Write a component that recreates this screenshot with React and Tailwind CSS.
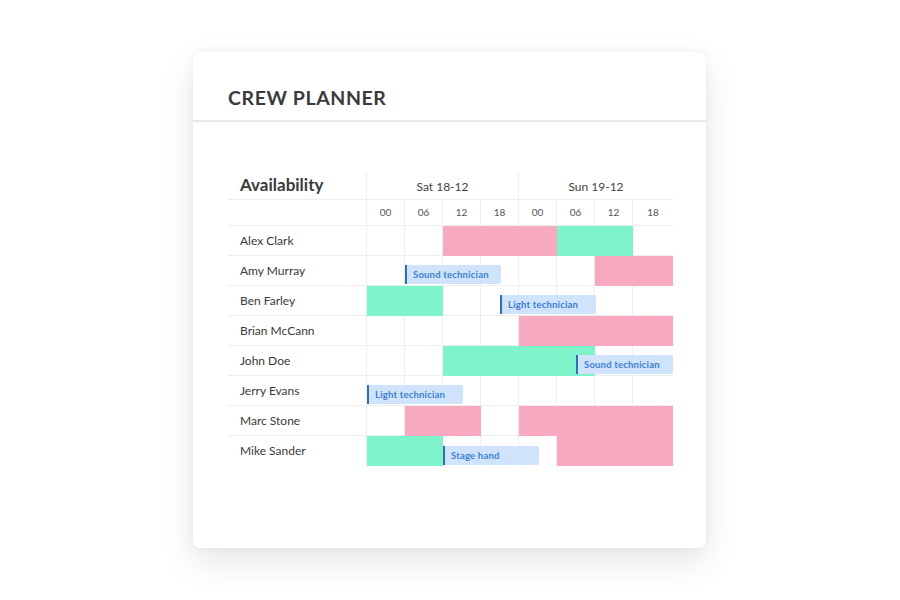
import React from "react";

const COL = 38;
const FULL = 306;
const PINK = "bg-[#f9a9bf]";
const GREEN = "bg-[#7ff3c9]";

const rows = [
  { name: "Alex Clark", blocks: [{ c: "p", s: 2, e: 5 }, { c: "g", s: 5, e: 7 }] },
  { name: "Amy Murray", blocks: [{ c: "p", s: 6, e: 8 }], tags: [{ t: "Sound technician", s: 1 }] },
  { name: "Ben Farley", blocks: [{ c: "g", s: 0, e: 2 }], tags: [{ t: "Light technician", s: 3.5 }] },
  { name: "Brian McCann", blocks: [{ c: "p", s: 4, e: 8 }] },
  { name: "John Doe", blocks: [{ c: "g", s: 2, e: 6 }], tags: [{ t: "Sound technician", s: 5.5 }] },
  { name: "Jerry Evans", blocks: [], tags: [{ t: "Light technician", s: 0 }] },
  { name: "Marc Stone", blocks: [{ c: "p", s: 1, e: 3 }, { c: "p", s: 4, e: 8 }] },
  { name: "Mike Sander", blocks: [{ c: "g", s: 0, e: 2 }, { c: "p", s: 5, e: 8 }], tags: [{ t: "Stage hand", s: 2 }] },
];

const hours = ["00", "06", "12", "18", "00", "06", "12", "18"];

const pos = (v) => (v >= 8 ? FULL : v * COL);

function GridCells() {
  return (
    <div className="absolute inset-0 flex">
      {hours.map((_, i) => (
        <div
          key={i}
          className={
            "h-full " + (i < 7 ? "w-[38px] border-r border-[#eeeeee]" : "flex-1")
          }
        />
      ))}
    </div>
  );
}

export default function App() {
  return (
    <div
      className="w-[900px] h-[600px] bg-white pt-[52px] pl-[193px]"
      style={{ fontFamily: "Lato, 'Noto Sans', sans-serif" }}
    >
      <div className="w-[513px] h-[496px] bg-white rounded-[7px] shadow-[0_14px_34px_rgba(0,0,0,0.10),0_0_8px_rgba(0,0,0,0.05)]">
        <div className="h-[70px] border-b-2 border-[#e8e8e8] pl-[35px] pt-[33px]">
          <div className="text-[19.5px] leading-[26px] font-bold tracking-[0.6px] text-[#3b3b3b]">
            CREW PLANNER
          </div>
        </div>
        <div className="pt-[51px] pl-[35px]">
          <div className="w-[445px]">
            {/* header row 1 */}
            <div className="flex h-[27px] border-b border-[#eeeeee]">
              <div className="w-[139px] border-r border-[#eeeeee] pl-[12px] text-[17px] leading-[24px] font-bold text-[#3a3a3a]">
                Availability
              </div>
              <div className="w-[152px] border-r border-[#eeeeee] text-center text-[12px] leading-[28px] text-[#444]">
                Sat 18-12
              </div>
              <div className="flex-1 text-center text-[12px] leading-[28px] text-[#444]">
                Sun 19-12
              </div>
            </div>
            {/* header row 2 */}
            <div className="flex h-[26px] border-b border-[#eeeeee]">
              <div className="w-[139px] border-r border-[#eeeeee]" />
              {hours.map((h, i) => (
                <div
                  key={i}
                  className={
                    "text-center text-[10px] leading-[25px] text-[#555] " +
                    (i < 7 ? "w-[38px] border-r border-[#eeeeee]" : "flex-1")
                  }
                >
                  {h}
                </div>
              ))}
            </div>
            {rows.map((r, ri) => (
              <div
                key={ri}
                className={"flex h-[30px] " + (ri < rows.length - 1 ? "border-b border-[#eeeeee]" : "")}
              >
                <div className="w-[139px] border-r border-[#eeeeee] pl-[12px] text-[12px] leading-[29px] text-[#3a3a3a]">
                  {r.name}
                </div>
                <div className="relative w-[306px] h-full">
                  <GridCells />
                  {r.blocks.map((b, bi) => (
                    <div
                      key={bi}
                      className={"absolute top-0 h-[30px] " + (b.c === "p" ? PINK : GREEN)}
                      style={{ left: pos(b.s), width: pos(b.e) - pos(b.s) }}
                    />
                  ))}
                  {(r.tags || []).map((t, ti) => (
                    <div
                      key={ti}
                      className="absolute bottom-[1px] h-[19px] bg-[#cfe3fb] border-l-2 border-[#2e6fc6] rounded-r-[2px] pl-[6px] text-[9.5px] leading-[19px] font-bold text-[#3c7fd6] tracking-[0.2px] whitespace-nowrap"
                      style={{ left: t.s * COL, width: t.s + 2.5 >= 8 ? FULL - t.s * COL : 96 }}
                    >
                      {t.t}
                    </div>
                  ))}
                </div>
              </div>
            ))}
          </div>
        </div>
      </div>
    </div>
  );
}
